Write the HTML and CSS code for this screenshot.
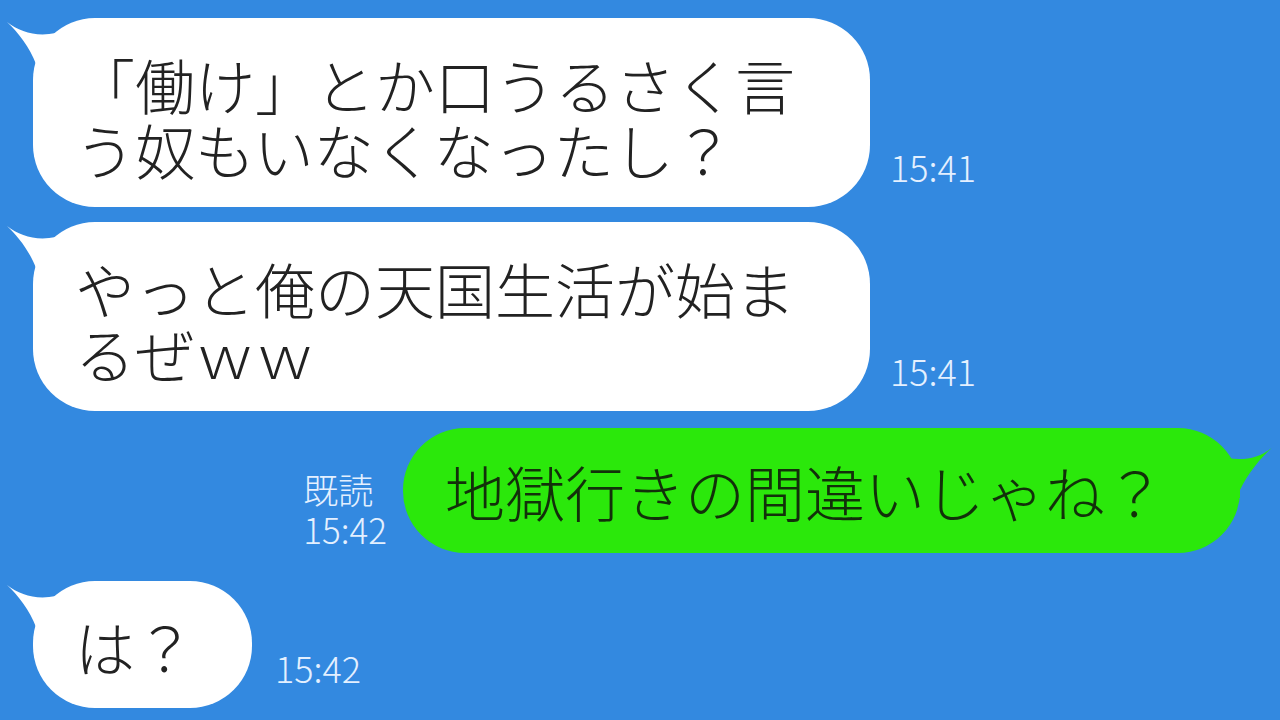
FILE: index.html
```html
<!DOCTYPE html>
<html lang="ja">
<head>
    <meta charset="UTF-8">
    <meta name="viewport" content="width=device-width, initial-scale=1.0">
    <title>トーク</title>
    <link rel="stylesheet" href="styles.css">
</head>

<body>

    <div class="chat">
        <div class="row row-1">
            <div class="bubble">
                <svg class="tail" viewBox="0 0 60 60" width="60" height="60">
                    <path d="M1,4 C14,14 30,19 50,15 L60,15 L60,60 L30,60 L30,46 C24,30 12,14 1,4 Z" fill="#fff"/>
                </svg>
                <p class="text">「働け」とか口うるさく言う奴もいなくなったし？</p>
            </div>
            <span class="time">15:41</span>
        </div>

        <div class="row row-2">
            <div class="bubble">
                <svg class="tail" viewBox="0 0 60 60" width="60" height="60">
                    <path d="M1,4 C14,14 30,19 50,15 L60,15 L60,60 L30,60 L30,46 C24,30 12,14 1,4 Z" fill="#fff"/>
                </svg>
                <p class="text">やっと俺の天国生活が始まるぜｗｗ</p>
            </div>
            <span class="time">15:41</span>
        </div>

        <div class="row row-3 mine">
            <p class="read">既読<br>15:42</p>
            <div class="bubble green">
                <svg class="tail-right" viewBox="0 0 60 80" width="60" height="80">
                    <path d="M58,18 C44,30 28,33 12,30 L0,30 L0,70 L24,70 L24,62 C32,45 46,28 58,18 Z" fill="#2be80b"/>
                </svg>
                <p class="text">地獄行きの間違いじゃね？</p>
            </div>
        </div>

        <div class="row row-4">
            <div class="bubble short">
                <svg class="tail" viewBox="0 0 60 60" width="60" height="60">
                    <path d="M1,4 C14,14 30,19 50,15 L60,15 L60,60 L30,60 L30,46 C24,30 12,14 1,4 Z" fill="#fff"/>
                </svg>
                <p class="text">は？</p>
            </div>
            <span class="time">15:42</span>
        </div>
    </div>

</body>
</html>
```

FILE: styles.css
```css
body {
    margin: 0;
    padding: 0;
    width: 1280px;
    height: 720px;
    overflow: hidden;
    background-color: #3389e0;
    font-family: "Noto Sans CJK JP", "Noto Sans", sans-serif;
}

.chat {
    display: flex;
    flex-direction: column;
    padding: 18px 40px 0 33px;
}

.row {
    display: flex;
    align-items: flex-end;
    gap: 20px;
}

.row-2 {
    margin-top: 15px;
}

.row-3 {
    margin-top: 17px;
}

.row-4 {
    margin-top: 28px;
    gap: 23px;
}

.mine {
    justify-content: flex-end;
    gap: 16px;
}

.bubble {
    position: relative;
    background-color: #fff;
    border-radius: 62px;
    padding: 33px 35px 26px 42px;
}

.bubble.short {
    padding: 32px 57px 30px 42px;
}

.bubble.green {
    background-color: #2be80b;
    padding: 30px 75px 30px 42px;
}

.text {
    margin: 0;
    max-width: 760px;
    font-size: 60px;
    line-height: 65px;
    font-weight: 300;
    color: #222;
    line-break: strict;
}

.green .text {
    color: #12300a;
}

.tail {
    position: absolute;
    left: -27px;
    top: 0;
}

.tail-right {
    position: absolute;
    right: -36px;
    top: 0;
}

.time {
    font-size: 36px;
    line-height: 43px;
    font-weight: 200;
    color: #e4f0ff;
    margin-bottom: 19px;
}

.read {
    margin: 0 0 4px;
    font-size: 35px;
    line-height: 40px;
    font-weight: 200;
    color: #e4f0ff;
}
```
